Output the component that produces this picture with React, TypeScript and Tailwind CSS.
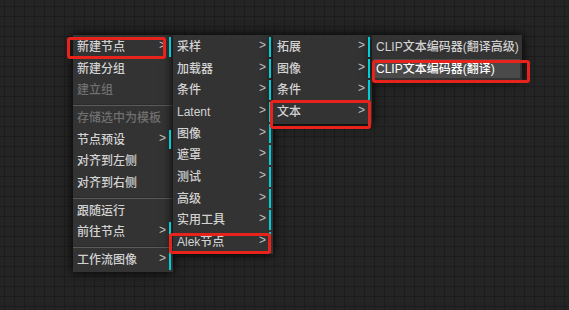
import React from 'react';

type Entry =
  | { label: string; sub?: boolean; disabled?: boolean; hover?: boolean; mark?: string }
  | 'sep';

// red annotation boxes, offsets relative to the item they circle
const markNew = '-left-[8px] right-[3px] top-0 -bottom-[2px]';
const markAlek = '-left-[6px] -right-[2px] top-[1px] -bottom-[2px]';
const markText = '-left-[5px] -right-[3px] -top-[2px] -bottom-[7px]';
const markClip = '-left-[2px] -right-[10px] top-[1px] -bottom-[5px]';

const menus: { width: string; items: Entry[] }[] = [
  {
    width: 'w-[100px]',
    items: [
      { label: '新建节点', sub: true, mark: markNew },
      { label: '新建分组' },
      { label: '建立组', disabled: true },
      'sep',
      { label: '存储选中为模板', disabled: true },
      { label: '节点预设', sub: true },
      { label: '对齐到左侧' },
      { label: '对齐到右侧' },
      'sep',
      { label: '跟随运行' },
      { label: '前往节点', sub: true },
      'sep',
      { label: '工作流图像', sub: true },
    ],
  },
  {
    width: 'w-[100px]',
    items: [
      { label: '采样', sub: true },
      { label: '加载器', sub: true },
      { label: '条件', sub: true },
      { label: 'Latent', sub: true },
      { label: '图像', sub: true },
      { label: '遮罩', sub: true },
      { label: '测试', sub: true },
      { label: '高级', sub: true },
      { label: '实用工具', sub: true },
      { label: 'Alek节点', sub: true, mark: markAlek },
    ],
  },
  {
    width: 'w-[99px]',
    items: [
      { label: '拓展', sub: true },
      { label: '图像', sub: true },
      { label: '条件', sub: true },
      { label: '文本', sub: true, mark: markText },
    ],
  },
  {
    width: 'w-[150px]',
    items: [
      { label: 'CLIP文本编码器(翻译高级)' },
      { label: 'CLIP文本编码器(翻译)', hover: true, mark: markClip },
    ],
  },
];

function MenuItem({ entry }: { entry: Exclude<Entry, 'sep'> }) {
  return (
    <div
      className={
        'relative mx-[2px] h-[19.67px] pl-[2px] pt-[1px] leading-[19.67px] whitespace-nowrap ' +
        (entry.sub ? 'border-r-2 border-[#00cdd6] ' : '') +
        (entry.hover ? 'bg-[#4a4a4a] text-white ' : '') +
        (entry.disabled ? 'text-[#707070]' : entry.hover ? '' : 'text-[#d2d2d2]')
      }
    >
      {entry.label}
      {entry.sub && (
        <span className="absolute right-[3px] -top-[1px] font-normal text-[#c0c0c0]">&gt;</span>
      )}
      {entry.mark && (
        <span
          className={
            'absolute z-10 rounded-[3px] border-[3px] border-[#e8231c] ' + entry.mark
          }
        />
      )}
    </div>
  );
}

export default function App() {
  return (
    <div className="h-[310px] w-[569px] overflow-hidden bg-[#242424] bg-[linear-gradient(#1c1c1c_1px,transparent_1px),linear-gradient(90deg,#1c1c1c_1px,transparent_1px)] bg-[size:10px_10px] bg-[position:4px_6px] font-['Liberation_Sans','Noto_Sans_CJK_SC',sans-serif] text-[12px] font-medium">
      <div className="flex items-start pl-[73px] pt-[35px]">
        {menus.map((menu, i) => (
          <div
            key={i}
            className={
              'flex flex-col gap-[2px] bg-[#333333] py-[2px] shadow-[0_0_10px_black] ' +
              menu.width
            }
          >
            {menu.items.map((entry, j) =>
              entry === 'sep' ? (
                <div
                  key={j}
                  className="mt-[2px] h-[2px] border-t border-b border-t-[#2c2c2c] border-b-[#5a5a5a]"
                />
              ) : (
                <MenuItem key={j} entry={entry} />
              )
            )}
          </div>
        ))}
      </div>
    </div>
  );
}
